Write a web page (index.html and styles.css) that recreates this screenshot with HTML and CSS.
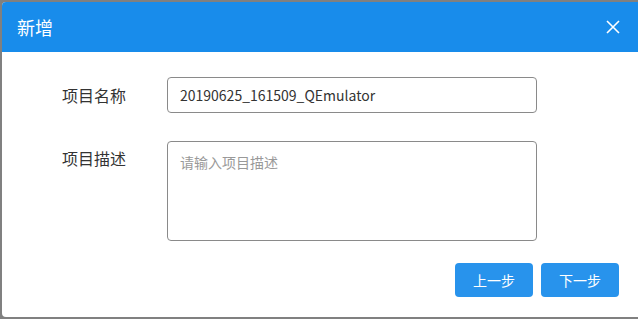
FILE: index.html
```html
<!DOCTYPE html>
<html lang="zh-CN">
<head>
  <meta charset="UTF-8" />
  <title>新增</title>
  <link rel="stylesheet" href="styles.css">
</head>
<body>
  <div class="dialog">
    <div class="dialog-header">
      <span class="dialog-title">新增</span>
      <svg class="close" width="14" height="14" viewBox="0 0 14 14">
        <path d="M1 1L13 13M13 1L1 13" stroke="#fff" stroke-width="1.6" fill="none" />
      </svg>
    </div>
    <div class="dialog-body">
      <div class="form-row">
        <label class="form-label">项目名称</label>
        <input class="form-input" type="text" value="20190625_161509_QEmulator" />
      </div>
      <div class="form-row">
        <label class="form-label label-top">项目描述</label>
        <textarea class="form-textarea" placeholder="请输入项目描述"></textarea>
      </div>
      <div class="actions">
        <button class="btn">上一步</button>
        <button class="btn">下一步</button>
      </div>
    </div>
  </div>
</body>
</html>
```

FILE: styles.css
```css
html, body {
  margin: 0;
  height: 100%;
  overflow: hidden;
}
body {
  background-color: #808080;
  padding: 2px 0 0 2px;
  box-sizing: border-box;
  font-family: "Noto Sans CJK SC", "Noto Sans", sans-serif;
}
.dialog {
  width: 640px;
  background-color: #fff;
  border-radius: 4px;
  overflow: hidden;
}
.dialog-header {
  height: 50px;
  background-color: #188ceb;
  display: flex;
  align-items: center;
  justify-content: space-between;
  padding: 0 22px 0 15px;
}
.dialog-title {
  color: #fff;
  font-size: 18px;
}
.dialog-body {
  padding: 25px 23px 20px 60px;
  display: flex;
  flex-direction: column;
  gap: 28px;
}
.form-row {
  display: flex;
  align-items: center;
}
.form-row:nth-child(2) {
  align-items: flex-start;
}
.form-label {
  width: 105px;
  font-size: 16px;
  color: #333;
}
.label-top {
  margin-top: 5px;
}
.form-input, .form-textarea {
  width: 370px;
  box-sizing: border-box;
  border: 1px solid #8a8a8a;
  border-radius: 4px;
  font-family: inherit;
  font-size: 14px;
  color: #333;
  outline: none;
}
.form-input {
  height: 36px;
  padding: 0 12px;
}
.form-textarea {
  height: 100px;
  padding: 10px 12px;
  resize: none;
}
.form-textarea::placeholder {
  color: #999;
}
.actions {
  display: flex;
  justify-content: flex-end;
  gap: 8px;
  margin-top: -6px;
}
.btn {
  width: 78px;
  height: 34px;
  background-color: #2893ec;
  color: #fff;
  border: none;
  border-radius: 4px;
  font-family: inherit;
  font-size: 14px;
  cursor: pointer;
}
```
